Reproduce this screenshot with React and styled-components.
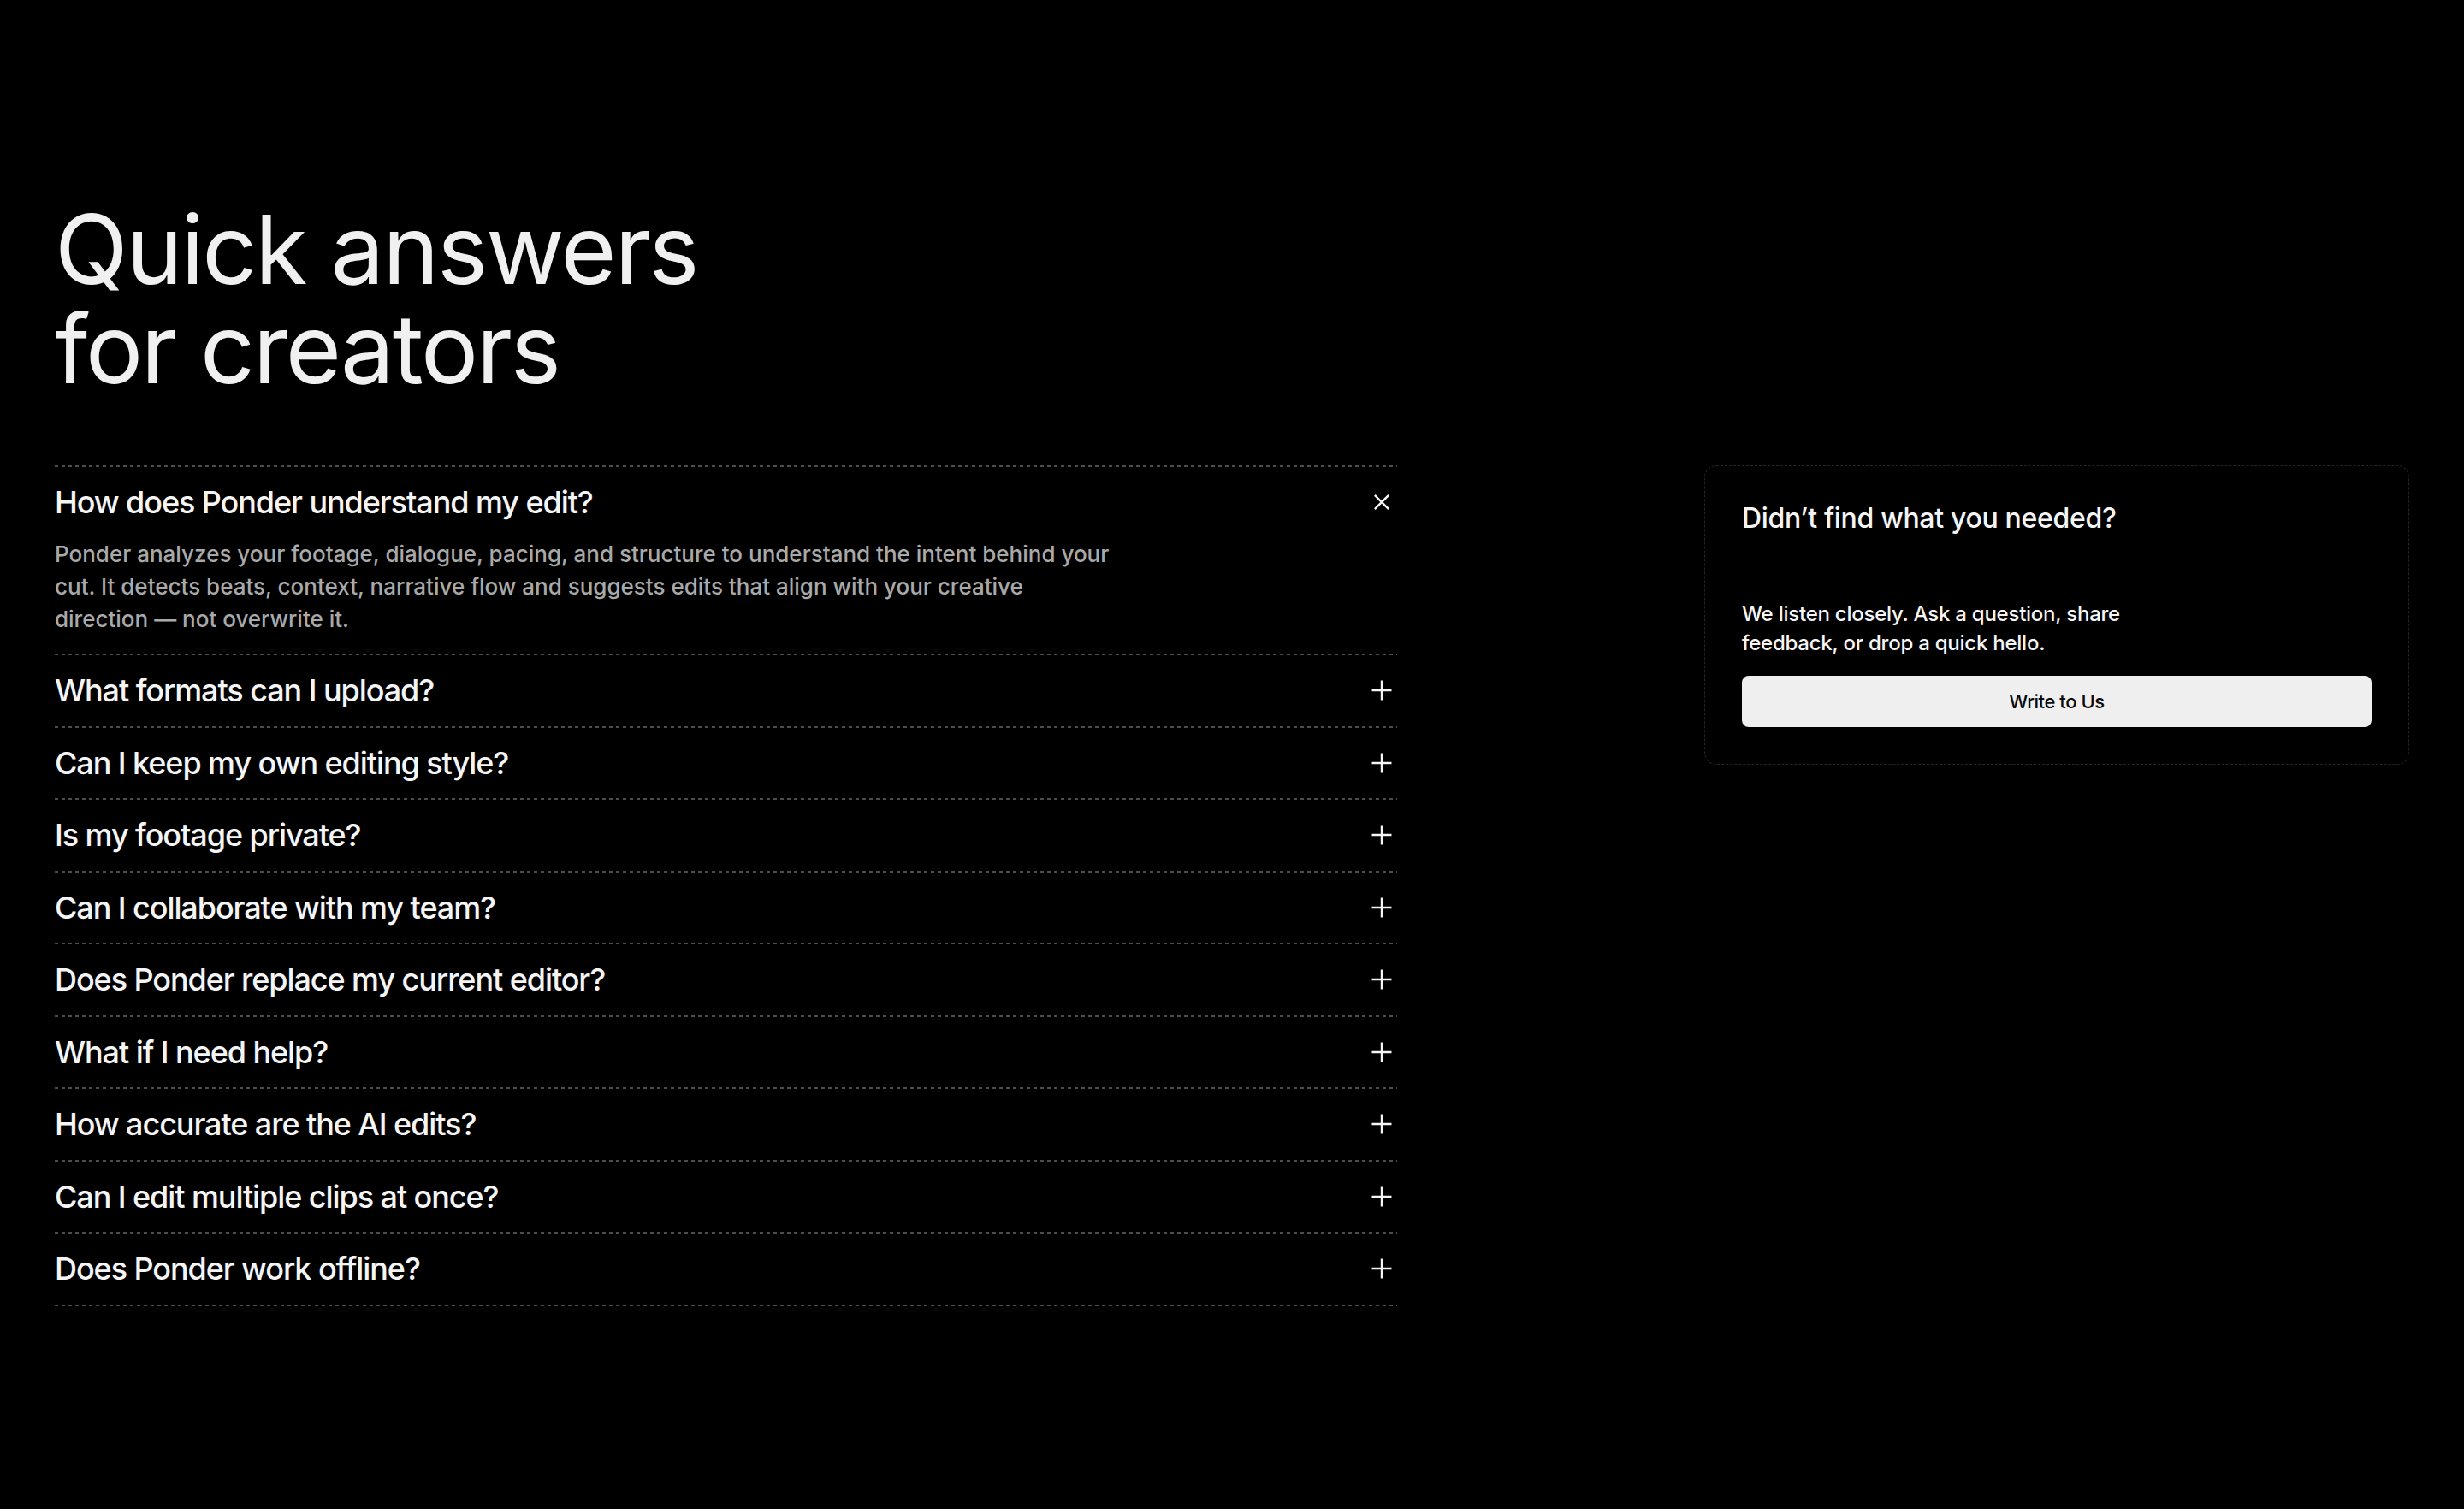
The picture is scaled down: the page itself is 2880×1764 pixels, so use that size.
import React, { useState } from "react";
import styled, { createGlobalStyle } from "styled-components";

const GlobalStyle = createGlobalStyle`
  html, body {
    margin: 0;
    padding: 0;
    background: #000000;
  }
  * {
    box-sizing: border-box;
  }
`;

const Page = styled.main`
  min-height: 100vh;
  background: #000000;
  color: #f2f2f2;
  font-family: Inter, "Noto Sans", sans-serif;
  padding: 233px 64px 120px;
`;

const Heading = styled.h1`
  margin: 0 0 79px;
  font-size: 112px;
  line-height: 116px;
  font-weight: 400;
  letter-spacing: -0.02em;
  color: #f0f0f0;
`;

const Layout = styled.div`
  display: flex;
  justify-content: space-between;
  align-items: flex-start;
`;

const FaqList = styled.div`
  width: 1569px;
  display: flex;
  flex-direction: column;
`;

/* dashed rule drawn as a repeating gradient so dash length is controllable */
const Item = styled.div`
  padding-top: 2px;
  background-image: linear-gradient(to right, #4d4d4d 50%, transparent 50%);
  background-size: 8px 2px;
  background-repeat: repeat-x;
  background-position: top left;

  &:last-child {
    padding-bottom: 2px;
    background-image: linear-gradient(to right, #4d4d4d 50%, transparent 50%),
      linear-gradient(to right, #4d4d4d 50%, transparent 50%);
    background-size: 8px 2px, 8px 2px;
    background-position: top left, bottom left;
  }
`;

const QuestionRow = styled.button`
  width: 100%;
  height: 82.5px;
  display: flex;
  align-items: center;
  justify-content: space-between;
  padding: 0;
  border: none;
  background: none;
  cursor: pointer;
  text-align: left;
  font-family: inherit;
  font-size: 36px;
  font-weight: 500;
  letter-spacing: -0.03em;
  color: #f5f5f5;
`;

const Toggle = styled.svg`
  width: 24px;
  height: 24px;
  margin-right: 6px;
  flex-shrink: 0;
  transform: rotate(${(p) => (p.$open ? 45 : 0)}deg);
  transform-origin: center;
`;

const Answer = styled.p`
  margin: 0;
  padding-bottom: 21.5px;
  max-width: 1241px;
  font-size: 26px;
  line-height: 38px;
  font-weight: 500;
  letter-spacing: 0;
  color: #a9a9a9;
`;

const Card = styled.aside`
  width: 824px;
  height: 350px;
  padding: 42px 43px;
  border: 1.5px dashed #262626;
  border-radius: 14px;
  display: flex;
  flex-direction: column;
`;

const CardTitle = styled.h3`
  margin: 0 0 76px;
  font-size: 32px;
  line-height: 38px;
  font-weight: 500;
  letter-spacing: -0.01em;
  color: #f5f5f5;
`;

const CardText = styled.p`
  margin: 0 0 21px;
  max-width: 470px;
  font-size: 24px;
  line-height: 34px;
  font-weight: 500;
  letter-spacing: -0.01em;
  color: #f5f5f5;
`;

const WriteButton = styled.button`
  width: 100%;
  height: 60px;
  border: none;
  border-radius: 8px;
  background: #efefef;
  color: #0a0a0a;
  font-family: inherit;
  font-size: 22px;
  font-weight: 500;
  letter-spacing: -0.02em;
  cursor: pointer;
`;

const faqs = [
  {
    q: "How does Ponder understand my edit?",
    a: "Ponder analyzes your footage, dialogue, pacing, and structure to understand the intent behind your cut. It detects beats, context, narrative flow and suggests edits that align with your creative direction — not overwrite it.",
  },
  { q: "What formats can I upload?", a: "" },
  { q: "Can I keep my own editing style?", a: "" },
  { q: "Is my footage private?", a: "" },
  { q: "Can I collaborate with my team?", a: "" },
  { q: "Does Ponder replace my current editor?", a: "" },
  { q: "What if I need help?", a: "" },
  { q: "How accurate are the AI edits?", a: "" },
  { q: "Can I edit multiple clips at once?", a: "" },
  { q: "Does Ponder work offline?", a: "" },
];

const PlusIcon = ({ open }) => (
  <Toggle $open={open} viewBox="0 0 24 24" fill="none">
    <path d="M12 0.5V23.5M0.5 12H23.5" stroke="#f5f5f5" strokeWidth="2.4" />
  </Toggle>
);

const App = () => {
  const [openIndex, setOpenIndex] = useState(0);

  return (
    <Page>
      <GlobalStyle />
      <Heading>
        Quick answers
        <br />
        for creators
      </Heading>
      <Layout>
        <FaqList>
          {faqs.map((item, index) => (
            <Item key={index}>
              <QuestionRow
                onClick={() => setOpenIndex(openIndex === index ? -1 : index)}
              >
                {item.q}
                <PlusIcon open={openIndex === index} />
              </QuestionRow>
              {openIndex === index && item.a && <Answer>{item.a}</Answer>}
            </Item>
          ))}
        </FaqList>
        <Card>
          <CardTitle>Didn’t find what you needed?</CardTitle>
          <CardText>
            We listen closely. Ask a question, share feedback, or drop a quick
            hello.
          </CardText>
          <WriteButton>Write to Us</WriteButton>
        </Card>
      </Layout>
    </Page>
  );
};

export default App;
